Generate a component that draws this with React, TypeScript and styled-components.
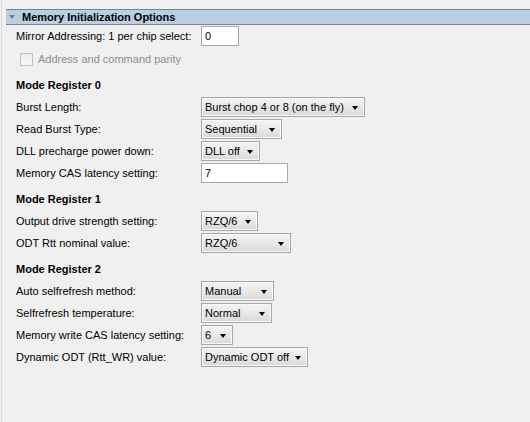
import React from "react";
import styled, { createGlobalStyle } from "styled-components";

const Global = createGlobalStyle`
  html, body { margin: 0; padding: 0; background: #f0f0f0; }
  body { font-family: "Liberation Sans", Arial, sans-serif; font-size: 11px; color: #000; }
`;

const Panel = styled.div`
  width: 529px;
  height: 422px;
  margin-left: 1px;
  padding-top: 9px;
  box-sizing: border-box;
  border-left: 1px solid #dcdcdc;
  background: #f0f0f0;
`;

const Header = styled.div`
  margin-left: 4px;
  height: 16px;
  box-sizing: border-box;
  border-top: 1px solid #808080;
  border-bottom: 1px solid #808080;
  background: #b9cfe5;
  display: flex;
  align-items: center;
  gap: 7px;
  padding-left: 3px;
  font-weight: bold;
  font-size: 11px;
`;

const Caret = styled.span`
  width: 0;
  height: 0;
  border-left: 3.5px solid transparent;
  border-right: 3.5px solid transparent;
  border-top: 4px solid #7a7a7a;
`;

const Body = styled.div`
  padding-left: 14px;
  display: flex;
  flex-direction: column;
`;

const Row = styled.div`
  display: grid;
  grid-template-columns: 185px auto;
  align-items: center;
  height: 22px;
`;

const Label = styled.span`
  line-height: 13px;
`;

const CheckRow = styled.label`
  display: flex;
  align-items: center;
  gap: 5px;
  height: 22px;
  margin-top: 1px;
  padding-left: 4px;
  color: #8d8d8d;
`;

const CheckBox = styled.span`
  width: 11px;
  height: 11px;
  border: 1px solid #c0c0c0;
  background: linear-gradient(#ececec, #f8f8f8);
`;

const Heading = styled.div`
  height: 26px;
  box-sizing: border-box;
  padding-top: 9px;
  line-height: 13px;
  font-weight: bold;
`;

const TextInput = styled.div<{ $w: number }>`
  width: ${(p) => p.$w}px;
  height: 20px;
  box-sizing: border-box;
  border: 1px solid #a9a9a9;
  background: #fff;
  padding-left: 3px;
  display: flex;
  align-items: center;
`;

const Select = styled.div<{ $w: number }>`
  width: ${(p) => p.$w}px;
  height: 20px;
  box-sizing: border-box;
  border: 1px solid #a7a7a7;
  box-shadow: inset 0 0 0 1px #f8f8f8;
  background: linear-gradient(#f4f4f4, #e6e6e6 60%, #d8d8d8);
  display: flex;
  align-items: center;
  justify-content: space-between;
  padding: 0 6px 0 3px;
  white-space: nowrap;
`;

const Arrow = styled.span`
  width: 0;
  height: 0;
  margin-top: 2px;
  border-left: 3.5px solid transparent;
  border-right: 3.5px solid transparent;
  border-top: 4px solid #000;
`;

type Item =
  | { kind: "heading"; text: string }
  | { kind: "select"; label: string; value: string; w: number }
  | { kind: "input"; label: string; value: string; w: number };

const items: Item[] = [
  { kind: "heading", text: "Mode Register 0" },
  { kind: "select", label: "Burst Length:", value: "Burst chop 4 or 8 (on the fly)", w: 164 },
  { kind: "select", label: "Read Burst Type:", value: "Sequential", w: 81 },
  { kind: "select", label: "DLL precharge power down:", value: "DLL off", w: 59 },
  { kind: "input", label: "Memory CAS latency setting:", value: "7", w: 87 },
  { kind: "heading", text: "Mode Register 1" },
  { kind: "select", label: "Output drive strength setting:", value: "RZQ/6", w: 57 },
  { kind: "select", label: "ODT Rtt nominal value:", value: "RZQ/6", w: 90 },
  { kind: "heading", text: "Mode Register 2" },
  { kind: "select", label: "Auto selfrefresh method:", value: "Manual", w: 73 },
  { kind: "select", label: "Selfrefresh temperature:", value: "Normal", w: 71 },
  { kind: "select", label: "Memory write CAS latency setting:", value: "6", w: 32 },
  { kind: "select", label: "Dynamic ODT (Rtt_WR) value:", value: "Dynamic ODT off", w: 107 },
];

export default function App() {
  return (
    <>
      <Global />
      <Panel>
        <Header>
          <Caret />
          Memory Initialization Options
        </Header>
        <Body>
          <Row>
            <Label>Mirror Addressing: 1 per chip select:</Label>
            <TextInput $w={38}>0</TextInput>
          </Row>
          <CheckRow>
            <CheckBox />
            Address and command parity
          </CheckRow>
          {items.map((it, i) =>
            it.kind === "heading" ? (
              <Heading key={i}>{it.text}</Heading>
            ) : (
              <Row key={i}>
                <Label>{it.label}</Label>
                {it.kind === "select" ? (
                  <Select $w={it.w}>
                    {it.value}
                    <Arrow />
                  </Select>
                ) : (
                  <TextInput $w={it.w}>{it.value}</TextInput>
                )}
              </Row>
            )
          )}
        </Body>
      </Panel>
    </>
  );
}
